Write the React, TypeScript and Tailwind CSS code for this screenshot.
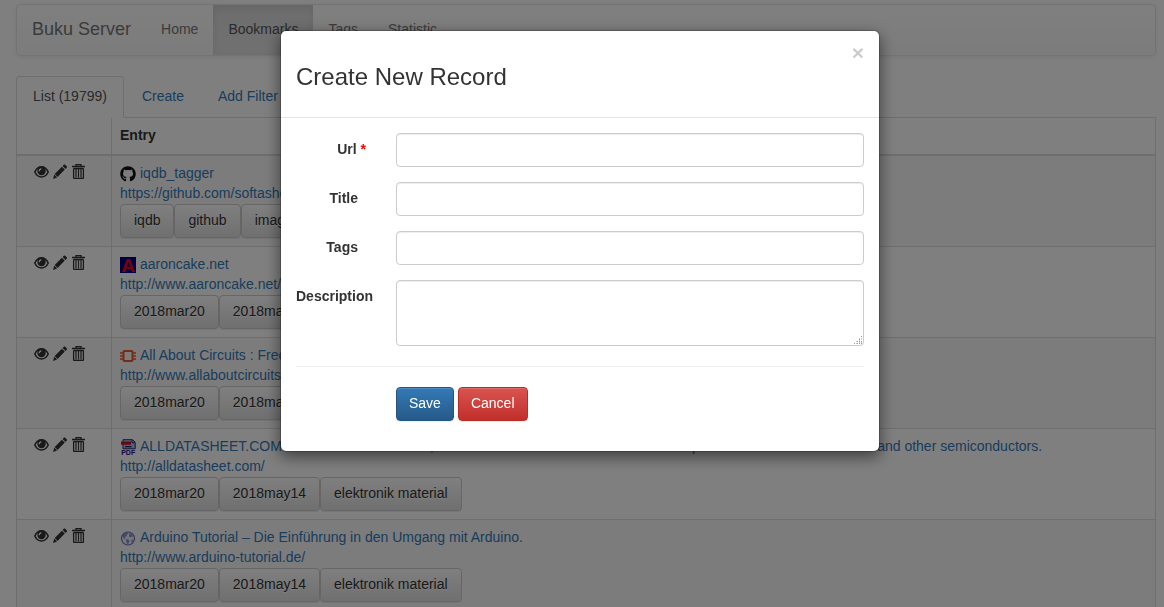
import type { ReactNode } from 'react';
import { FaGithub } from 'react-icons/fa';

function EyeIcon() {
  return (
    <svg className="h-[15px] w-[15px]" viewBox="0 0 15 15" fill="none" aria-hidden="true">
      <path d="M.8 8C2.300 4.700 4.600 2.900 7.500 2.900S12.700 4.700 14.200 8c-1.500 3.200-3.800 5-6.700 5S2.300 11.200.8 8Z" stroke="#333" strokeWidth="1.600" />
      <circle cx="7.500" cy="7" r="4.200" fill="#333" />
      <path d="M5.200 7.200c0-1.300.8-2.200 2.200-2.400" stroke="#fff" strokeWidth="1.200" />
    </svg>
  );
}

function PencilIcon() {
  return (
    <svg className="h-[15px] w-3.5" viewBox="0 0 14 15" fill="#333" aria-hidden="true">
      <path d="M10.800.8c.4-.4 1-.4 1.400 0l1.500 1.500c.4.400.4 1 0 1.400l-1.200 1.200-2.900-2.900L10.800.8ZM8.900 2.700l2.900 2.900-7.200 7.300-2.900-2.900 7.200-7.300ZM1.200 10.600l2.900 2.900-4 1.400 1.100-4.300Z" />
    </svg>
  );
}

function TrashIcon() {
  return (
    <svg className="h-[15px] w-[15px]" viewBox="0 0 15 15" fill="none" stroke="#333" aria-hidden="true">
      <path d="M1 2.500h13M5 2.500V.7h5v1.800" strokeWidth="1.300" />
      <path d="M2.500 4.500h10M2.600 4.500v9.200c0 .5.300.8.800.8h8.200c.5 0 .8-.3.800-.8V4.500" strokeWidth="1.300" />
      <path d="M5 5v8.500M7.500 5v8.500M10 5v8.500" strokeWidth="1.200" />
    </svg>
  );
}

const favicons: Record<string, ReactNode> = {
  github: <FaGithub className="size-4 text-[#111]" aria-hidden="true" />,
  aaron: (
    <svg className="size-4 overflow-visible" viewBox="0 0 16 16" aria-hidden="true">
      <rect width="16" height="16" fill="#000080" />
      <text x="8" y="14.800" textAnchor="middle" fontFamily="Liberation Sans, sans-serif" fontWeight="700" fontSize="19" fill="#f00018">A</text>
    </svg>
  ),
  circuits: (
    <svg className="size-4" viewBox="0 0 16 16" fill="none" stroke="#e8592b" aria-hidden="true">
      <rect x="3.500" y="3" width="9" height="10" rx="1" strokeWidth="2" />
      <path d="M0 5h3M0 8h3M0 11h3M13 5h3M13 8h3M13 11h3" strokeWidth="1.400" />
    </svg>
  ),
  pdf: (
    <svg className="size-4 overflow-visible" viewBox="0 0 16 16" aria-hidden="true">
      <path d="M3 .7h9.500l2.700 2.600v6.500H3Z" fill="#a9c3e8" stroke="#1c2c7a" />
      <path d="M12 1v2.700h3" fill="none" stroke="#1c2c7a" />
      <rect x="1" y="2.500" width="10" height="3.200" fill="#d01020" />
      <path d="M5 7h6.500v1.300H5Z" fill="#1c2c7a" />
      <text x="8.200" y="15.800" textAnchor="middle" fontFamily="Liberation Sans, sans-serif" fontWeight="700" fontSize="7" fill="#1a1280">PDF</text>
    </svg>
  ),
  globe: (
    <svg className="size-4" viewBox="0 0 16 16" aria-hidden="true">
      <circle cx="8" cy="8.500" r="6.500" fill="#eef0fa" stroke="#6d70b4" strokeWidth="1.200" />
      <path d="M3 5c1-1.500 2.500-2.500 4.500-2.600l1 1.300-2 1 .5 1.300-2 1 .5 1.500-1.500.3L3 7ZM9.500 3l2.500 1.500L13.500 7l-2-.5-1.200 1L9 6.500ZM6 9l2.500.5 1 1.800-1.500 3-1.500-1.500ZM11.500 9.500l2 .3-1 2.200-1.300.5Z" fill="#8b90c4" />
    </svg>
  ),
};

interface Bookmark {
  icon: string;
  title: string;
  url: string;
  tags: string[];
}

const bookmarks: Bookmark[] = [
  { icon: 'github', title: 'iqdb_tagger', url: 'https://github.com/softashell/iqdb_tagger', tags: ['iqdb', 'github', 'image', 'tagger'] },
  { icon: 'aaron', title: 'aaroncake.net', url: 'http://www.aaroncake.net/', tags: ['2018mar20', '2018may14', 'elektronik material'] },
  { icon: 'circuits', title: 'All About Circuits : Free Electric Circuits Textbooks', url: 'http://www.allaboutcircuits.com/', tags: ['2018mar20', '2018may14', 'elektronik material'] },
  {
    icon: 'pdf',
    title: 'ALLDATASHEET.COM - Datasheet search site, Datasheet search site for Electronic Components and Semiconductors and other semiconductors.',
    url: 'http://alldatasheet.com/',
    tags: ['2018mar20', '2018may14', 'elektronik material'],
  },
  { icon: 'globe', title: 'Arduino Tutorial – Die Einführung in den Umgang mit Arduino.', url: 'http://www.arduino-tutorial.de/', tags: ['2018mar20', '2018may14', 'elektronik material'] },
];

function Navbar() {
  const link = 'px-[15px] pt-3.5 pb-4 leading-5';
  return (
    <nav className="mb-5 flex rounded border border-[#e7e7e7] bg-linear-to-b from-white to-[#f8f8f8] text-[#777] shadow-[inset_0_1px_0_rgba(255,255,255,.15),0_1px_5px_rgba(0,0,0,.075)]">
      <a href="#" className="px-[15px] pt-3.5 pb-4 text-lg leading-5">Buku Server</a>
      <a href="#home" className={link}>Home</a>
      <a href="#bookmarks" aria-current="page" className="bg-linear-to-b from-[#dbdbdb] to-[#e2e2e2] px-[15px] pt-3.5 pb-4 leading-5 text-[#555] shadow-[inset_0_3px_9px_rgba(0,0,0,.075)]">Bookmarks</a>
      <a href="#tags" className={link}>Tags</a>
      <a href="#statistic" className={link}>Statistic</a>
    </nav>
  );
}

function Tabs() {
  return (
    <div className="flex gap-0.5 border-b border-[#ddd]">
      <a href="#list" className="-mb-px rounded-t border border-[#ddd] border-b-white bg-white px-4 pt-[9px] pb-[11px] text-[#555]">List (19799)</a>
      <a href="#create" className="px-4 py-2.5 text-[#337ab7]">Create</a>
      <a href="#filter" className="px-4 py-2.5 text-[#337ab7]">Add Filter</a>
    </div>
  );
}

function BookmarkRow({ item }: { item: Bookmark }) {
  return (
    <tr className="odd:bg-[#f9f9f9]">
      <td className="border border-[#ddd] px-2 pt-[7px] pb-2 align-top">
        <div className="flex items-start gap-1 pt-px pl-[9px]">
          <button type="button" aria-label="View record"><EyeIcon /></button>
          <button type="button" aria-label="Edit record"><PencilIcon /></button>
          <button type="button" aria-label="Delete record"><TrashIcon /></button>
        </div>
      </td>
      <td className="border border-[#ddd] px-2 pt-[7px] pb-2 align-top">
        <div className="flex items-end gap-1">
          <span className="-mb-px pb-0.5">{favicons[item.icon]}</span>
          <a href={item.url} className="text-[#337ab7]">{item.title}</a>
        </div>
        <a href={item.url} className="block text-[#337ab7]">{item.url}</a>
        <div className="mt-px flex">
          {item.tags.map((tag) => (
            <button
              key={tag}
              type="button"
              className="rounded border border-[#ccc] bg-linear-to-b from-white to-[#e0e0e0] px-[13px] pt-[5px] pb-[7px] text-[#333] shadow-[inset_0_1px_0_rgba(255,255,255,.15),0_1px_1px_rgba(0,0,0,.075)] [text-shadow:0_1px_0_#fff]"
            >
              {tag}
            </button>
          ))}
        </div>
      </td>
    </tr>
  );
}

function Field({ id, label, required, children }: { id: string; label: string; required?: boolean; children: ReactNode }) {
  return (
    <div className="flex gap-[30px]">
      <label htmlFor={id} className={required ? 'w-[70px] shrink-0 pt-1.5 text-right font-bold whitespace-nowrap' : 'w-[70px] shrink-0 pt-1.5 pr-2 text-right font-bold whitespace-nowrap'}>
        {label}
        {required && <span className="text-[#f00]"> *</span>}
      </label>
      <div className="relative flex min-w-0 flex-1">{children}</div>
    </div>
  );
}

const control = 'w-full rounded border border-[#ccc] bg-white px-3 py-1.5 shadow-[inset_0_1px_1px_rgba(0,0,0,.075)] outline-none';

function CreateDialog() {
  return (
    <div className="fixed inset-0 overflow-hidden bg-black/50 pt-[30px] pr-1">
      <div role="dialog" aria-modal="true" aria-labelledby="dialog-title" className="mx-auto max-w-[600px] rounded-md border border-black/20 bg-white bg-clip-padding shadow-[0_5px_15px_rgba(0,0,0,.5)]">
        <header className="flex items-start justify-between border-b border-[#e5e5e5] p-[15px]">
          <h3 id="dialog-title" className="mt-[18px] mb-3 text-2xl leading-[26px]">Create New Record</h3>
          <button type="button" aria-label="Close" className="-mt-1 text-[21px] leading-[21px] font-bold text-black opacity-20 [text-shadow:0_1px_0_#fff]">×</button>
        </header>
        <form className="flex flex-col gap-[15px] p-[15px] pb-[30px]">
          <Field id="url" label="Url" required><input id="url" type="text" className={control} /></Field>
          <Field id="title" label="Title"><input id="title" type="text" className={control} /></Field>
          <Field id="tags" label="Tags"><input id="tags" type="text" className={control} /></Field>
          <Field id="description" label="Description">
            <textarea id="description" className="h-[66px] w-full resize-none rounded border border-[#ccc] bg-white px-3 py-1.5 shadow-[inset_0_1px_1px_rgba(0,0,0,.075)] outline-none" />
            <svg className="pointer-events-none absolute right-px bottom-px size-[9px]" viewBox="0 0 9 9" aria-hidden="true">
              <path d="M7 0h1v1H7ZM5 3h1v1H5ZM3 5h1v1H3ZM5 5h1v1H5ZM7 5h1v1H7ZM0 7h1v1H0ZM3 7h1v1H3ZM5 7h1v1H5ZM7 7h1v1H7Z" fill="#999" />
              <path d="M7 2h1v2H7ZM5 2h1v1H5ZM5 4h1v1H5ZM2 5h1v1H2ZM2 7h1v1H2ZM5 6h1v1H5ZM7 6h1v1H7Z" fill="#ccc" />
            </svg>
          </Field>
          <hr className="my-[5px] border-[#eee]" />
          <div className="flex gap-1 pl-[100px] text-white [text-shadow:0_-1px_0_rgba(0,0,0,.2)]">
            <button type="submit" className="rounded border border-[#245580] bg-linear-to-b from-[#337ab7] to-[#265a88] px-3 pt-[5px] pb-[7px] shadow-[inset_0_1px_0_rgba(255,255,255,.15),0_1px_1px_rgba(0,0,0,.075)]">Save</button>
            <button type="button" className="rounded border border-[#b92c28] bg-linear-to-b from-[#d9534f] to-[#c12e2a] px-3 pt-[5px] pb-[7px] shadow-[inset_0_1px_0_rgba(255,255,255,.15),0_1px_1px_rgba(0,0,0,.075)]">Cancel</button>
          </div>
        </form>
      </div>
    </div>
  );
}

export default function App() {
  return (
    <div className="h-screen overflow-hidden bg-white font-['Liberation_Sans',Arial,sans-serif] text-sm leading-5 text-[#333]">
      <main className="pt-1 pr-2 pl-4">
        <Navbar />
        <Tabs />
        <table className="-mt-px w-full border-collapse">
          <thead>
            <tr>
              <th aria-label="Actions" className="w-[95px] border border-b-2 border-[#ddd] border-t-transparent px-2 pt-[7px] pb-[9px]" />
              <th className="border border-b-2 border-[#ddd] border-t-transparent px-2 pt-[7px] pb-[9px] text-left font-bold">Entry</th>
            </tr>
          </thead>
          <tbody>
            {bookmarks.map((item) => <BookmarkRow key={item.title} item={item} />)}
          </tbody>
        </table>
      </main>
      <CreateDialog />
    </div>
  );
}
